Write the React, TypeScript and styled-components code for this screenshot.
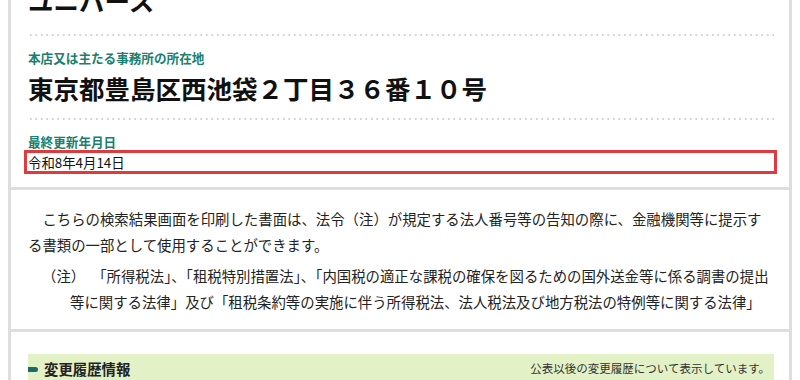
import React from 'react';
import styled, { createGlobalStyle } from 'styled-components';

const GlobalStyle = createGlobalStyle`
  html, body {
    margin: 0;
    padding: 0;
    background: #ffffff;
  }
  body {
    font-family: "Noto Sans CJK JP", "Noto Sans", sans-serif;
    color: #222;
    overflow: hidden;
  }
`;

const Page = styled.main`
  margin: -18px 8px 0;
`;

const Section = styled.section<{ $top?: number; $bottom?: number }>`
  border: 3px solid #dedede;
  border-top: none;
  padding: ${({ $top }) => $top ?? 0}px 15px ${({ $bottom }) => $bottom ?? 0}px 17px;
`;

const CompanyName = styled.h1`
  margin: 0;
  font-size: 25.5px;
  line-height: 36px;
  font-weight: 700;
  color: #111;
`;

const Dots = styled.hr<{ $top: number; $bottom: number }>`
  border: none;
  height: 2px;
  margin: ${({ $top }) => $top}px 0 ${({ $bottom }) => $bottom}px;
  background-image: radial-gradient(circle, #d2d2d2 0.9px, transparent 1.1px);
  background-size: 5.5px 2px;
  background-repeat: repeat-x;
`;

const FieldLabel = styled.h2`
  margin: 0;
  font-size: 12.6px;
  line-height: 16px;
  font-weight: 700;
  color: #18806f;
`;

const Address = styled.p`
  margin: 5px 0 0;
  font-size: 25.5px;
  line-height: 34px;
  font-weight: 700;
  color: #111;
`;

const Highlight = styled.div`
  margin: 0 -3px 0 -4px;
  border: 3px solid #e03a3f;
  padding: 0 1px;
  font-size: 13.4px;
  line-height: 18px;
  color: #111;
`;

const Paragraph = styled.p`
  margin: 0;
  font-size: 14.4px;
  line-height: 26px;
  text-indent: 1em;
  color: #222;
`;

const Note = styled.p`
  margin: 5px 0 0;
  padding-left: 42px;
  text-indent: -28px;
  font-size: 14.4px;
  line-height: 26px;
  color: #222;
`;

const NoteMark = styled.span`
  display: inline-block;
  text-indent: 0;
  margin-right: 7px;
`;

const HistoryBar = styled.div`
  display: flex;
  align-items: center;
  justify-content: space-between;
  background: #e3f1c6;
  padding: 4px 4px 8px 0;
`;

const HistoryTitle = styled.h3`
  display: flex;
  align-items: center;
  gap: 6px;
  margin: 0;
  font-size: 14.4px;
  line-height: 22px;
  font-weight: 700;
  color: #222;

  &::before {
    content: '';
    width: 10px;
    height: 5px;
    border-radius: 0 3px 3px 0;
    background: #1b6b6b;
  }
`;

const HistoryNote = styled.span`
  font-size: 11.5px;
  line-height: 18px;
  color: #333;
  margin-top: -3px;
`;

export default function App() {
  return (
    <>
      <GlobalStyle />
      <Page>
        <Section $bottom={13}>
          <CompanyName>ユニバース</CompanyName>
          <Dots $top={16} $bottom={14} />
          <FieldLabel>本店又は主たる事務所の所在地</FieldLabel>
          <Address>東京都豊島区西池袋２丁目３６番１０号</Address>
          <Dots $top={13} $bottom={14} />
          <FieldLabel>最終更新年月日</FieldLabel>
          <Highlight>令和8年4月14日</Highlight>
        </Section>

        <Section $top={16} $bottom={14}>
          <Paragraph>
            こちらの検索結果画面を印刷した書面は、法令（注）が規定する法人番号等の告知の際に、金融機関等に提示する書類の一部として使用することができます。
          </Paragraph>
          <Note>
            <NoteMark>（注）</NoteMark>「所得税法」、「租税特別措置法」、「内国税の適正な課税の確保を図るための国外送金等に係る調書の提出等に関する法律」及び「租税条約等の実施に伴う所得税法、法人税法及び地方税法の特例等に関する法律」
          </Note>
        </Section>

        <Section $top={22} $bottom={20}>
          <HistoryBar>
            <HistoryTitle>変更履歴情報</HistoryTitle>
            <HistoryNote>公表以後の変更履歴について表示しています。</HistoryNote>
          </HistoryBar>
        </Section>
      </Page>
    </>
  );
}
